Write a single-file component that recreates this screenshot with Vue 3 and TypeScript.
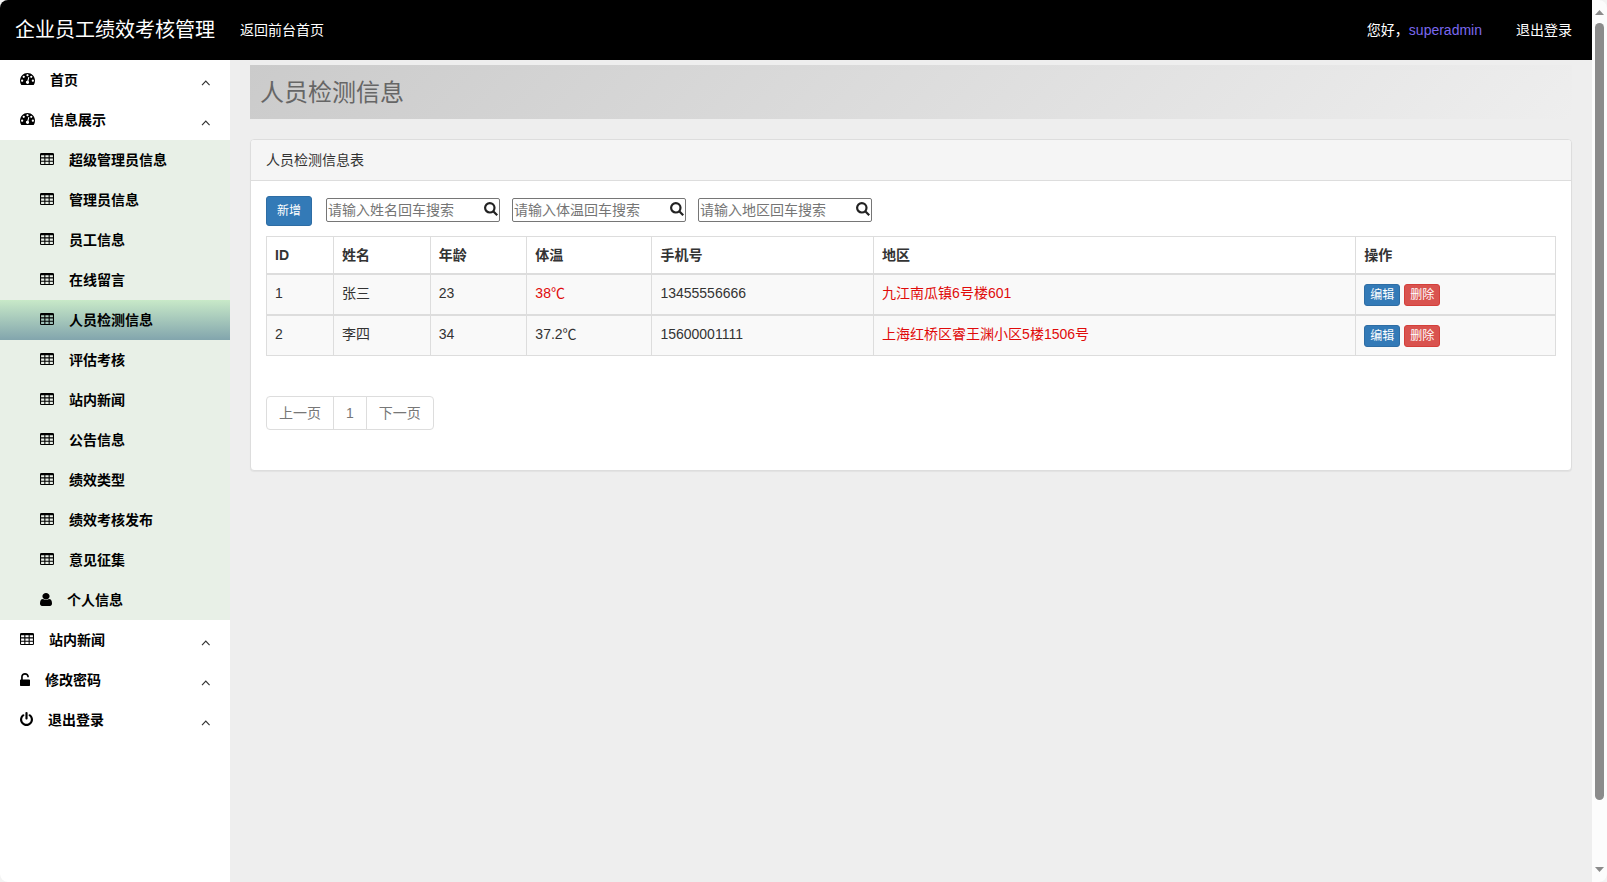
<script setup lang="ts">
import { reactive, ref } from 'vue'

type IconName = 'gauge' | 'table' | 'user' | 'unlock' | 'power'

interface Icon {
  width: number
  height: number
  viewBox: string
  path: string
}

interface MenuItem {
  label: string
  icon: IconName
  children?: MenuItem[]
}

interface Person {
  id: number
  name: string
  age: number
  temperature: number
  phone: string
  area: string
}

const icons: Record<IconName, Icon> = {
  gauge: {
    width: 15,
    height: 12,
    viewBox: '0 256 1792 1408',
    path: 'M384 1152q0-53-37.5-90.5t-90.5-37.5-90.5 37.5-37.5 90.5 37.5 90.5 90.5 37.5 90.5-37.5 37.5-90.5zm192-448q0-53-37.5-90.5t-90.5-37.5-90.5 37.5-37.5 90.5 37.5 90.5 90.5 37.5 90.5-37.5 37.5-90.5zm428 481l101-382q6-26-7.5-48.5t-38.5-29.5-48 6.5-30 39.5l-101 382q-60 5-107 43.5t-63 98.5q-20 77 20 146t117 89 146-20 89-117q16-60-6-117t-72-91zm660-33q0-53-37.5-90.5t-90.5-37.5-90.5 37.5-37.5 90.5 37.5 90.5 90.5 37.5 90.5-37.5 37.5-90.5zm-640-640q0-53-37.5-90.5t-90.5-37.5-90.5 37.5-37.5 90.5 37.5 90.5 90.5 37.5 90.5-37.5 37.5-90.5zm448 192q0-53-37.5-90.5t-90.5-37.5-90.5 37.5-37.5 90.5 37.5 90.5 90.5 37.5 90.5-37.5 37.5-90.5zm320 448q0 261-141 483-19 29-54 29h-1402q-35 0-54-29-141-221-141-483 0-182 71-348t191-286 286-191 348-71 348 71 286 191 191 286 71 348z',
  },
  table: {
    width: 14,
    height: 12,
    viewBox: '64 128 1664 1408',
    path: 'M224 128H1568Q1728 128 1728 288V1376Q1728 1536 1568 1536H224Q64 1536 64 1376V288Q64 128 224 128zM192 384V640H576V384zM704 384V640H1088V384zM1216 384V640H1600V384zM192 768V1024H576V768zM704 768V1024H1088V768zM1216 768V1024H1600V768zM192 1152V1408H576V1152zM704 1152V1408H1088V1152zM1216 1152V1408H1600V1152z',
  },
  user: {
    width: 12,
    height: 13,
    viewBox: '256 128 1280 1536',
    path: 'M1536 1399q0 109-62.5 187t-150.5 78h-854q-88 0-150.5-78t-62.5-187q0-85 8.5-160.5t31.5-152 58.5-131 94-89 134.5-34.5q131 128 313 128t313-128q76 0 134.5 34.5t94 89 58.5 131 31.5 152 8.5 160.5zm-256-887q0 159-112.5 271.5t-271.5 112.5-271.5-112.5-112.5-271.5 112.5-271.5 271.5-112.5 271.5 112.5 112.5 271.5z',
  },
  unlock: {
    width: 10,
    height: 13,
    viewBox: '320 0 1152 1536',
    path: 'M1376 768q40 0 68 28t28 68v576q0 40-28 68t-68 28h-960q-40 0-68-28t-28-68v-576q0-40 28-68t68-28h32v-320q0-185 131.5-316.5t316.5-131.5 316.5 131.5 131.5 316.5q0 26-19 45t-45 19h-64q-26 0-45-19t-19-45q0-106-75-181t-181-75-181 75-75 181v320h736z',
  },
  power: {
    width: 13,
    height: 14,
    viewBox: '128 0 1536 1664',
    path: 'M1664 896q0 156-61 298t-164 245-245 164-298 61-298-61-245-164-164-245-61-298q0-182 80.5-343t226.5-270q43-32 95.5-25t83.5 50q32 42 24.5 94.5t-49.5 84.5q-98 74-151.5 181t-53.5 228q0 104 40.5 198.5t109.5 163.5 163.5 109.5 198.5 40.5 198.5-40.5 163.5-109.5 109.5-163.5 40.5-198.5q0-121-53.5-228t-151.5-181q-42-32-49.5-84.5t24.5-94.5q31-43 84-50t95 25q146 109 226.5 270t80.5 343zm-640-768v640q0 52-38 90t-90 38-90-38-38-90v-640q0-52 38-90t90-38 90 38 38 90z',
  },
}

const menu: MenuItem[] = [
  { label: '首页', icon: 'gauge' },
  {
    label: '信息展示',
    icon: 'gauge',
    children: [
      { label: '超级管理员信息', icon: 'table' },
      { label: '管理员信息', icon: 'table' },
      { label: '员工信息', icon: 'table' },
      { label: '在线留言', icon: 'table' },
      { label: '人员检测信息', icon: 'table' },
      { label: '评估考核', icon: 'table' },
      { label: '站内新闻', icon: 'table' },
      { label: '公告信息', icon: 'table' },
      { label: '绩效类型', icon: 'table' },
      { label: '绩效考核发布', icon: 'table' },
      { label: '意见征集', icon: 'table' },
      { label: '个人信息', icon: 'user' },
    ],
  },
  { label: '站内新闻', icon: 'table' },
  { label: '修改密码', icon: 'unlock' },
  { label: '退出登录', icon: 'power' },
]

const activeLabel = ref('人员检测信息')

const searches = reactive([
  { key: 'name', placeholder: '请输入姓名回车搜索', value: '' },
  { key: 'temperature', placeholder: '请输入体温回车搜索', value: '' },
  { key: 'area', placeholder: '请输入地区回车搜索', value: '' },
])

const people: Person[] = [
  { id: 1, name: '张三', age: 23, temperature: 38, phone: '13455556666', area: '九江南瓜镇6号楼601' },
  { id: 2, name: '李四', age: 34, temperature: 37.2, phone: '15600001111', area: '上海红桥区睿王渊小区5楼1506号' },
]

const feverLimit = 37.5
</script>

<template>
  <div class="window">
    <div class="page">
      <header class="topbar">
        <a class="brand" href="#">企业员工绩效考核管理</a>
        <a class="top-link" href="#">返回前台首页</a>
        <div class="account">
          <span>您好，<a class="username" href="#">superadmin</a></span>
          <a class="top-link" href="#">退出登录</a>
        </div>
      </header>

      <div class="body">
        <nav class="sidebar">
          <ul>
            <li v-for="item in menu" :key="item.label">
              <a class="menu-link" href="#">
                <svg
                  class="menu-icon"
                  :width="icons[item.icon].width"
                  :height="icons[item.icon].height"
                  :viewBox="icons[item.icon].viewBox"
                  preserveAspectRatio="none"
                  aria-hidden="true"
                >
                  <path :d="icons[item.icon].path" fill-rule="evenodd" />
                </svg>
                <span>{{ item.label }}</span>
                <svg class="chevron" width="9" height="6" viewBox="0 0 9 6" aria-hidden="true">
                  <path d="M1 5.2L4.8 1.2L8.6 5.2" />
                </svg>
              </a>
              <ul v-if="item.children" class="submenu">
                <li v-for="child in item.children" :key="child.label">
                  <a
                    class="menu-link"
                    :class="{ active: child.label === activeLabel }"
                    href="#"
                    @click.prevent="activeLabel = child.label"
                  >
                    <svg
                      class="menu-icon"
                      :width="icons[child.icon].width"
                      :height="icons[child.icon].height"
                      :viewBox="icons[child.icon].viewBox"
                      preserveAspectRatio="none"
                      aria-hidden="true"
                    >
                      <path :d="icons[child.icon].path" fill-rule="evenodd" />
                    </svg>
                    <span>{{ child.label }}</span>
                  </a>
                </li>
              </ul>
            </li>
          </ul>
        </nav>

        <main class="content">
          <h1 class="page-title">人员检测信息</h1>

          <section class="panel">
            <h2 class="panel-heading">人员检测信息表</h2>
            <div class="panel-body">
              <div class="toolbar">
                <button class="btn btn-primary btn-add" type="button">新增</button>
                <div class="searches">
                  <div v-for="search in searches" :key="search.key" class="search">
                    <input
                      v-model="search.value"
                      type="text"
                      :placeholder="search.placeholder"
                      :aria-label="search.placeholder"
                    />
                    <svg class="search-icon" width="14" height="14" viewBox="0 0 14 14" aria-hidden="true">
                      <circle cx="5.8" cy="5.8" r="4.7" />
                      <path d="M9.2 9.2L13.2 13.2" />
                    </svg>
                  </div>
                </div>
              </div>

              <table class="people">
                <colgroup>
                  <col class="col-id" />
                  <col class="col-name" />
                  <col class="col-age" />
                  <col class="col-temp" />
                  <col class="col-phone" />
                  <col />
                  <col class="col-actions" />
                </colgroup>
                <thead>
                  <tr>
                    <th scope="col">ID</th>
                    <th scope="col">姓名</th>
                    <th scope="col">年龄</th>
                    <th scope="col">体温</th>
                    <th scope="col">手机号</th>
                    <th scope="col">地区</th>
                    <th scope="col">操作</th>
                  </tr>
                </thead>
                <tbody>
                  <tr v-for="person in people" :key="person.id">
                    <td>{{ person.id }}</td>
                    <td>{{ person.name }}</td>
                    <td>{{ person.age }}</td>
                    <td :class="{ alert: person.temperature > feverLimit }">{{ person.temperature }}℃</td>
                    <td>{{ person.phone }}</td>
                    <td class="alert">{{ person.area }}</td>
                    <td>
                      <div class="actions">
                        <button class="btn btn-primary btn-small" type="button">编辑</button>
                        <button class="btn btn-danger btn-small" type="button">删除</button>
                      </div>
                    </td>
                  </tr>
                </tbody>
              </table>

              <ul class="pagination">
                <li><a href="#">上一页</a></li>
                <li><a href="#">1</a></li>
                <li><a href="#">下一页</a></li>
              </ul>
            </div>
          </section>
        </main>
      </div>
    </div>

    <div class="scrollbar" aria-hidden="true">
      <svg width="9" height="5" viewBox="0 0 9 5"><path d="M0 5L4.5 0L9 5z" /></svg>
      <div class="track"><div class="thumb"></div></div>
      <svg width="9" height="5" viewBox="0 0 9 5"><path d="M0 0L4.5 5L9 0z" /></svg>
    </div>
  </div>
</template>

<style>
body {
  margin: 0;
  background: #f3f3f3;
}
</style>

<style scoped>
.window {
  display: flex;
  height: 100vh;
  overflow: hidden;
  border-radius: 8px;
  background: #eee;
  color: #333;
  font: 14px/20px "Liberation Sans", "Noto Sans CJK SC", sans-serif;
}

.window *,
.window *::before {
  box-sizing: border-box;
}

ul {
  margin: 0;
  padding: 0;
  list-style: none;
}

a {
  color: inherit;
  text-decoration: none;
}

.page {
  flex: 1;
  min-width: 0;
  display: flex;
  flex-direction: column;
}

.topbar {
  display: flex;
  align-items: center;
  gap: 25px;
  flex: none;
  height: 60px;
  padding: 0 20px 0 15px;
  background: #000;
  color: #fff;
}

.brand {
  font-size: 20px;
}

.account {
  display: flex;
  gap: 34px;
  margin-left: auto;
}

.username {
  color: #7b68ee;
}

.body {
  flex: 1;
  min-height: 0;
  display: flex;
}

.sidebar {
  flex: none;
  width: 230px;
  background: #fff;
  color: #000;
  font-weight: bold;
}

.menu-link {
  display: flex;
  align-items: center;
  gap: 15px;
  height: 40px;
  padding: 0 20px;
}

.menu-icon {
  flex: none;
  margin-bottom: 2px;
  fill: #000;
}

.chevron {
  margin: 6px 0 0 auto;
  fill: none;
  stroke: #333;
  stroke-width: 1.2;
}

.submenu {
  background: #e8f0e7;
}

.submenu .menu-link {
  padding-left: 40px;
}

.submenu .active {
  background: linear-gradient(#c8e9c8, #82a5ad);
}

.content {
  flex: 1;
  min-width: 0;
  padding: 5px 20px 0;
}

.page-title {
  margin: 0 0 20px;
  padding: 13px 10px 11px;
  background: linear-gradient(135deg, #cbcbcb, #eee);
  color: #666;
  font-size: 24px;
  font-weight: normal;
  line-height: 30px;
}

.panel {
  border: 1px solid #ddd;
  border-radius: 4px;
  background: #fff;
  box-shadow: 0 1px 1px rgba(0, 0, 0, 0.05);
}

.panel-heading {
  margin: 0;
  padding: 10px 15px;
  border-bottom: 1px solid #ddd;
  border-radius: 3px 3px 0 0;
  background: #f5f5f5;
  font-size: 14px;
  font-weight: normal;
}

.panel-body {
  padding: 15px 15px 40px;
}

.toolbar {
  display: flex;
  align-items: center;
  gap: 14px;
  margin-bottom: 10px;
}

.btn {
  border: 1px solid;
  border-radius: 3px;
  color: #fff;
  font: 12px/18px "Liberation Sans", "Noto Sans CJK SC", sans-serif;
  cursor: pointer;
}

.btn-primary {
  border-color: #2e6da4;
  background: #337ab7;
}

.btn-danger {
  border-color: #d43f3a;
  background: #d9534f;
}

.btn-add {
  padding: 5px 10px;
}

.btn-small {
  padding: 1px 5px;
}

.searches {
  display: flex;
  gap: 12px;
  margin-bottom: 2px;
}

.search {
  position: relative;
  width: 174px;
}

.search input {
  display: block;
  width: 100%;
  height: 24px;
  padding: 1px 20px 1px 1px;
  border: 1px solid #767676;
  border-radius: 2px;
  background: #fff;
  color: #333;
  font: inherit;
}

.search input::placeholder {
  color: #757575;
  opacity: 1;
}

.search-icon {
  position: absolute;
  top: 4px;
  right: 2px;
  fill: none;
  stroke: #222;
  stroke-width: 2.2;
}

.people {
  width: 100%;
  margin-bottom: 40px;
  border-collapse: collapse;
  table-layout: fixed;
}

.col-id {
  width: 5.2%;
}

.col-name,
.col-age {
  width: 7.5%;
}

.col-temp {
  width: 9.7%;
}

.col-phone {
  width: 17.2%;
}

.col-actions {
  width: 15.5%;
}

.people th,
.people td {
  padding: 8px;
  border: 1px solid #ddd;
  text-align: left;
  vertical-align: top;
}

.people thead th,
.people tbody tr:not(:last-child) td {
  border-bottom-width: 2px;
}

.people tbody tr {
  background: #f9f9f9;
}

.people .alert {
  color: #e00b0b;
}

.actions {
  display: flex;
  gap: 4px;
  padding-top: 1px;
}

.pagination {
  display: flex;
}

.pagination a {
  display: block;
  margin-left: -1px;
  padding: 6px 12px;
  border: 1px solid #ddd;
  background: #fff;
  color: #777;
}

.pagination li:first-child a {
  margin-left: 0;
  border-radius: 4px 0 0 4px;
}

.pagination li:last-child a {
  border-radius: 0 4px 4px 0;
}

.scrollbar {
  flex: none;
  display: flex;
  flex-direction: column;
  align-items: center;
  gap: 8px;
  width: 15px;
  padding: 10px 0;
  background: #fcfcfc;
  fill: #8b8b8b;
}

.scrollbar svg {
  flex: none;
}

.track {
  flex: 1;
  width: 9px;
}

.thumb {
  height: 93%;
  border-radius: 5px;
  background: #8b8b8b;
}
</style>
